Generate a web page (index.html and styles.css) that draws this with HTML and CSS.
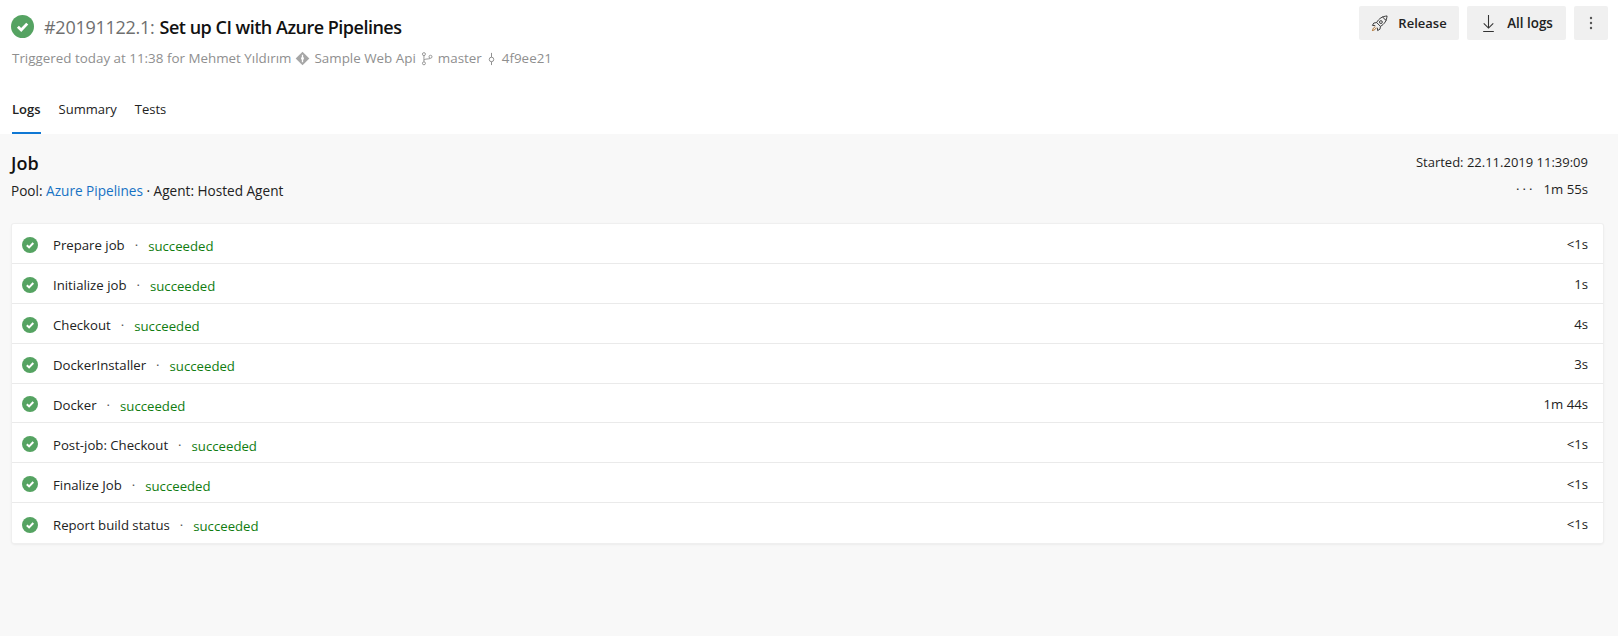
FILE: index.html
```html
<!DOCTYPE html>
<html lang="en">
<head>
<meta charset="utf-8">
<title>Set up CI with Azure Pipelines</title>
<link rel="stylesheet" href="styles.css">
</head>
<body>
<svg class="defs" width="0" height="0" aria-hidden="true">
  <symbol id="ok" viewBox="0 0 16 16">
    <circle cx="8" cy="8" r="8" fill="#55a362"/>
    <path d="M4.800 8.200l2.300 2.200 4.200-4.400" fill="none" stroke="#fff" stroke-width="2"/>
  </symbol>
</svg>
<header class="header">
  <div class="head-top">
    <div class="head-main">
      <h1 class="title">
        <svg class="title-icon"><use href="#ok"/></svg>
        <span class="run-no">#20191122.1:</span>
        <span class="run-name">Set up CI with Azure Pipelines</span>
      </h1>
      <div class="meta">
        <span>Triggered today at 11:38 for Mehmet Yıldırım</span>
        <svg class="meta-icon" viewBox="0 0 16 16"><path d="M8 .7L15.300 8 8 15.300.7 8z" fill="#a6a6a6"/><path d="M8 4v8" stroke="#fff" stroke-width="1.400"/><circle cx="8" cy="8" r="1.500" fill="#fff"/></svg>
        <span>Sample Web Api</span>
        <svg class="meta-icon meta-icon-branch" viewBox="0 0 16 16" fill="none" stroke="#8a8a8a"><circle cx="4.500" cy="3" r="1.700"/><circle cx="4.500" cy="13.500" r="1.700"/><circle cx="12" cy="6" r="1.700"/><path d="M4.500 4.700v7M4.500 10c0-2 7-1 7.300-2.400"/></svg>
        <span>master</span>
        <svg class="meta-icon meta-icon-commit" viewBox="0 0 11 16" fill="none" stroke="#8a8a8a"><circle cx="5.500" cy="9" r="2.400"/><path d="M5.500 2v4.600M5.500 11.400V15"/></svg>
        <span class="commit">4f9ee21</span>
      </div>
    </div>
    <div class="actions">
      <button class="btn">
        <svg class="btn-icon" viewBox="0 0 18 18" fill="none" stroke="#333"><path d="M6 8C8.500 3.500 12 1.500 17 1c-.5 5-2.500 8.500-7 11z"/><path d="M12.500 1.500c.5 2 1.800 3.300 4 4"/><circle cx="10.500" cy="7.500" r="1.500"/><path d="M6 8L3 8.500 1.500 11l3 .3M10 12l-.5 3-2.500 1.500-.3-3"/><path d="M4.500 12.500C3 13 2 14.500 1.500 16.500c2-.5 3.500-1.500 4-3" stroke="#a9651d"/></svg>
        Release
      </button>
      <button class="btn btn-logs">
        <svg class="btn-icon" viewBox="0 0 16 16" fill="none" stroke="#333"><path d="M8 0v12M3.500 7.800L8 12.300l4.500-4.500M3 15.500h10"/></svg>
        All logs
      </button>
      <button class="btn btn-more" aria-label="More">
        <svg width="4" height="14" viewBox="0 0 4 14" fill="#555"><circle cx="2" cy="2" r="1.200"/><circle cx="2" cy="7" r="1.200"/><circle cx="2" cy="12" r="1.200"/></svg>
      </button>
    </div>
  </div>
  <nav class="tabs">
    <a class="tab tab-active">Logs</a>
    <a class="tab">Summary</a>
    <a class="tab">Tests</a>
  </nav>
</header>
<main class="content">
  <div class="job-head">
    <div>
      <h2 class="job-title">Job</h2>
      <div class="job-line">Pool: <a class="link">Azure Pipelines</a> · Agent: Hosted Agent</div>
    </div>
    <div class="job-right">
      <div class="started">Started: 22.11.2019 11:39:09</div>
      <div class="job-duration"><span class="dots">···</span><span>1m 55s</span></div>
    </div>
  </div>
  <section class="card">
    <div class="row"><svg class="row-icon"><use href="#ok"/></svg><span class="name">Prepare job</span><span class="sep">·</span><span class="status">succeeded</span><span class="time">&lt;1s</span></div>
    <div class="row"><svg class="row-icon"><use href="#ok"/></svg><span class="name">Initialize job</span><span class="sep">·</span><span class="status">succeeded</span><span class="time">1s</span></div>
    <div class="row"><svg class="row-icon"><use href="#ok"/></svg><span class="name">Checkout</span><span class="sep">·</span><span class="status">succeeded</span><span class="time">4s</span></div>
    <div class="row"><svg class="row-icon"><use href="#ok"/></svg><span class="name">DockerInstaller</span><span class="sep">·</span><span class="status">succeeded</span><span class="time">3s</span></div>
    <div class="row"><svg class="row-icon"><use href="#ok"/></svg><span class="name">Docker</span><span class="sep">·</span><span class="status">succeeded</span><span class="time">1m 44s</span></div>
    <div class="row"><svg class="row-icon"><use href="#ok"/></svg><span class="name">Post-job: Checkout</span><span class="sep">·</span><span class="status">succeeded</span><span class="time">&lt;1s</span></div>
    <div class="row"><svg class="row-icon"><use href="#ok"/></svg><span class="name">Finalize Job</span><span class="sep">·</span><span class="status">succeeded</span><span class="time">&lt;1s</span></div>
    <div class="row"><svg class="row-icon"><use href="#ok"/></svg><span class="name">Report build status</span><span class="sep">·</span><span class="status">succeeded</span><span class="time">&lt;1s</span></div>
  </section>
</main>
</body>
</html>
```
FILE: styles.css
```css
* { box-sizing: border-box; }
html, body { height: 100%; }
body {
  margin: 0;
  display: flex;
  flex-direction: column;
  background: #f8f8f8;
  color: #1f1f1f;
  font: 13.200px/18px "Open Sans", "Noto Sans", sans-serif;
  overflow: hidden;
}
.defs { display: block; height: 0; }
.header { background: #fff; height: 134px; padding: 6px 10px 0 12px; flex: none; }
.head-top { display: flex; justify-content: space-between; height: 83px; }
.head-main { padding-top: 9px; margin-left: -1px; }
.title { display: flex; align-items: center; margin: 0; font-size: 18px; line-height: 24px; font-weight: 600; color: #111; gap: 5px; }
.title-icon { width: 23px; height: 23px; margin: -2px 5px 0 0; }
.run-no { color: #6f6f6f; font-weight: 400; letter-spacing: -.26px; }
.run-name { letter-spacing: -.5px; }
.meta { display: flex; align-items: center; gap: 4px; margin: 10px 0 0 1px; color: #8f8f8f; font-size: 13.400px; }
.meta-icon { width: 15px; height: 15px; }
.meta-icon-branch { width: 14px; }
.meta-icon-commit { width: 11px; }
.commit { margin-left: 1px; }
.actions { display: flex; gap: 8px; }
.btn { display: flex; align-items: center; justify-content: center; gap: 10px; width: 100px; height: 34px; border: 0; border-radius: 2px; background: #f0f0f0; color: #222; font: 600 13px "Open Sans", sans-serif; padding: 0; }
.btn-icon { width: 17px; height: 17px; }
.btn-logs { width: 99px; font-size: 13.400px; }
.btn-more { width: 34px; }
.tabs { display: flex; gap: 18px; height: 45px; }
.tab { display: flex; align-items: center; height: 45px; padding-bottom: 4px; color: #222; font-size: 13px; border-bottom: 2px solid transparent; }
.tab-active { font-weight: 600; border-bottom-color: #0f78d4; }
.content { flex: 1; padding: 0 15px 0 12px; }
.job-head { display: flex; justify-content: space-between; padding: 17px 0 0; height: 90px; }
.job-title { margin: 0 0 0 -1px; font-size: 18px; line-height: 24px; font-weight: 600; color: #111; }
.job-line { margin: 7px 0 0 -1px; color: #222; font-size: 13.600px; }
.link { color: #1672c4; }
.job-right { text-align: right; padding-top: 1px; padding-right: 15px; }
.started { line-height: 20px; font-size: 13px; }
.job-duration { display: flex; justify-content: flex-end; gap: 8px; margin-top: 8px; }
.dots { letter-spacing: 3px; }
.card { background: #fff; border-radius: 2px; box-shadow: 0 0 0 1px #efefef, 0 1px 3px rgba(0,0,0,.1); }
.row { display: flex; align-items: center; height: 39.875px; padding: 4px 15px 0 10px; border-bottom: 1px solid #eaeaea; }
.row:last-child { border-bottom: 0; }
.row-icon { width: 16px; height: 16px; margin-right: 15px; margin-top: -1px; }
.name { color: #222; }
.sep { margin: 0 10px; color: #555; }
.status { color: #107c10; position: relative; top: 1px; }
.time { margin-left: auto; color: #222; position: relative; top: -1px; }
```
